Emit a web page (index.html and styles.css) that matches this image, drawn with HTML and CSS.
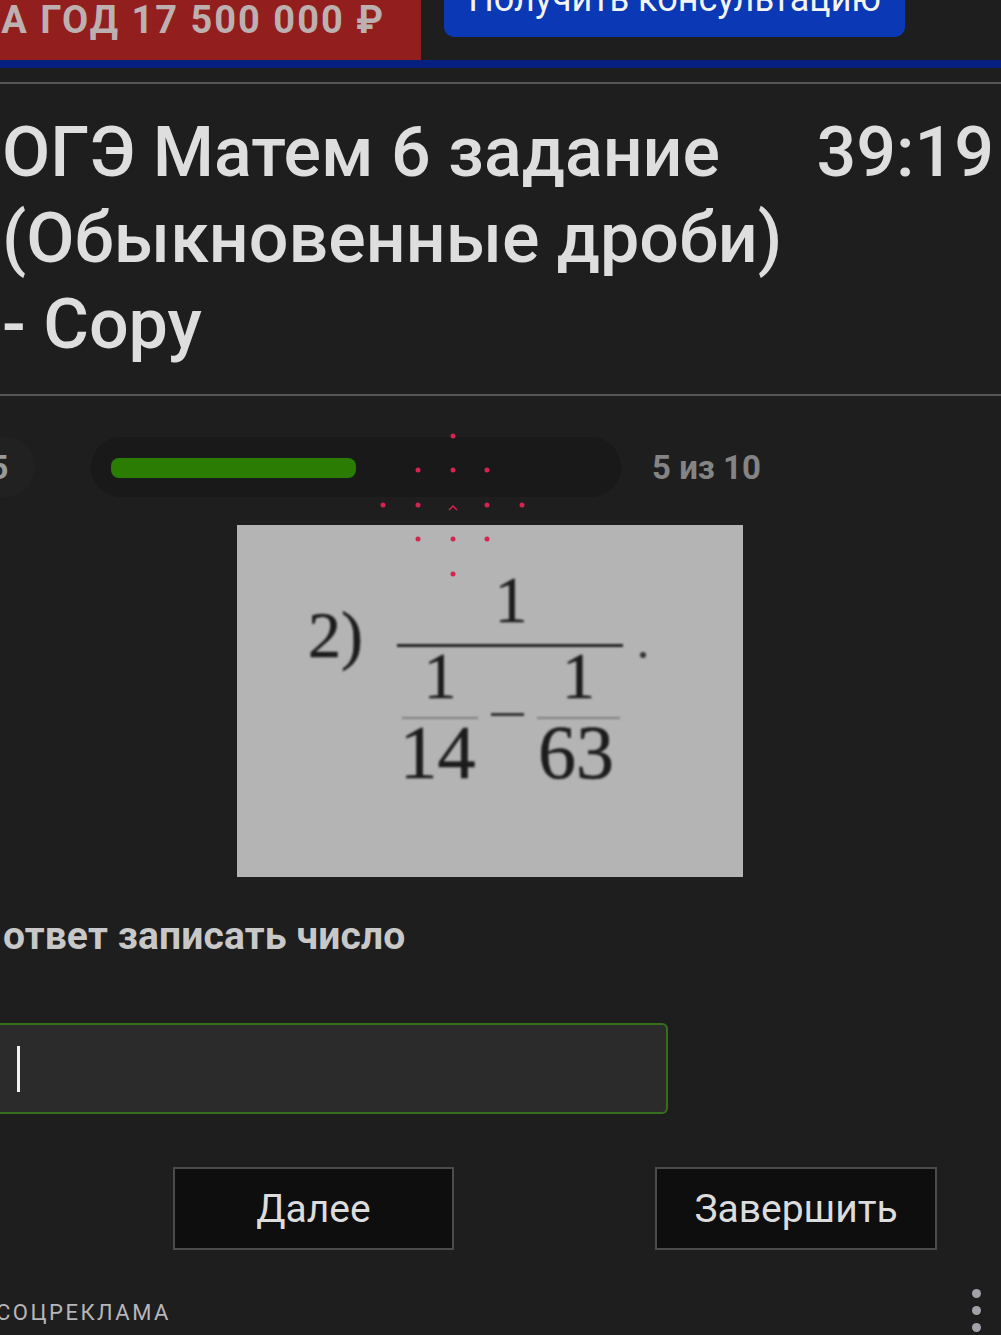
FILE: index.html
```html
<!DOCTYPE html>
<html lang="en">
  <head>
    <meta charset="UTF-8" />
    <meta name="viewport" content="width=device-width, initial-scale=1.0" />
    <title>ОГЭ Матем 6 задание</title>
    <link rel="stylesheet" href="styles.css">
  </head>
  <body>
    <div class="promo">
      <div class="promo-price"><span>ЗА ГОД 17 500 000 ₽</span></div>
      <div class="promo-btn"><span>Получить консультацию</span></div>
    </div>
    <div class="promo-line"></div>

    <header class="test-head">
      <h1>ОГЭ Матем 6 задание<br />(Обыкновенные дроби)<br />- Copy</h1>
      <div class="timer">39:19</div>
    </header>

    <div class="progress-row">
      <div class="step-circle"><span>5</span></div>
      <div class="progress"><div class="progress-fill"></div></div>
      <div class="progress-text">5 из 10</div>
    </div>

    <div class="task-pic">
      <div class="task-math">
        <div class="task-num">2)</div>
        <div class="frac-main">
          <div class="frac-top">1</div>
          <div class="frac-bottom">
            <div class="frac-small">
              <div class="small-top">1</div>
              <div class="small-bottom">14</div>
            </div>
            <div class="minus"></div>
            <div class="frac-small frac-wide">
              <div class="small-top">1</div>
              <div class="small-bottom">63</div>
            </div>
          </div>
        </div>
        <div class="math-dot"></div>
      </div>
    </div>

    <p class="question">ответ записать число</p>

    <div class="answer"><div class="caret"></div></div>

    <div class="actions">
      <div class="btn btn-next">Далее</div>
      <div class="btn btn-finish">Завершить</div>
    </div>

    <div class="foot">
      <span class="foot-label">СОЦРЕКЛАМА</span>
      <div class="foot-menu"><i></i><i></i><i></i></div>
    </div>

    <!-- touch pointer marks on top of the page -->
    <svg class="pointer" width="160" height="155" viewBox="0 0 160 155">
      <g fill="#d6234f">
        <circle cx="80" cy="11" r="2.5" />
        <circle cx="45" cy="45" r="2.5" />
        <circle cx="80" cy="45" r="2.5" />
        <circle cx="114" cy="45" r="2.5" />
        <circle cx="10" cy="80" r="2.5" />
        <circle cx="45" cy="80" r="2.5" />
        <circle cx="114" cy="80" r="2.5" />
        <circle cx="149" cy="80" r="2.5" />
        <circle cx="45" cy="114" r="2.5" />
        <circle cx="80" cy="114" r="2.5" />
        <circle cx="114" cy="114" r="2.5" />
        <circle cx="80" cy="149" r="2.5" />
      </g>
      <path d="M76 85 L80 81 L84 85" fill="none" stroke="#d6234f" stroke-width="1.5" />
    </svg>
  </body>
</html>
```

FILE: styles.css
```css
html,
body {
  margin: 0;
  padding: 0;
}

body {
  position: relative;
  width: 1001px;
  height: 1335px;
  overflow: hidden;
  background-color: #1e1e1f;
  color: #e0e0e0;
  font-family: Roboto, "Liberation Sans", sans-serif;
}

.promo {
  display: flex;
  height: 60px;
  gap: 23px;
  align-items: flex-start;
}

.promo-price {
  width: 421px;
  height: 60px;
  background-color: #931e1e;
  display: flex;
  justify-content: flex-end;
  overflow: hidden;
  padding-right: 36px;
  box-sizing: border-box;
}

.promo-price span {
  display: block;
  flex-shrink: 0;
  font-size: 38px;
  line-height: 40px;
  font-weight: 700;
  letter-spacing: 2px;
  color: #bcb0b0;
  white-space: nowrap;
}

.promo-btn {
  width: 461px;
  height: 37px;
  background-color: #0b39b6;
  border-radius: 0 0 10px 10px;
  overflow: hidden;
  display: flex;
  justify-content: center;
  align-items: flex-end;
}

.promo-btn span {
  font-size: 36px;
  line-height: 36px;
  color: #f4f4f4;
  white-space: nowrap;
  margin-bottom: 20px;
}

.promo-line {
  height: 8px;
  background-color: #06207f;
}

.test-head {
  display: flex;
  justify-content: space-between;
  align-items: flex-start;
  margin-top: 14px;
  border-top: 2px solid #565656;
  border-bottom: 2px solid #565656;
  height: 285px;
  padding: 25px 7px 0 2px;
  box-sizing: content-box;
}

.test-head h1 {
  margin: 0;
  font-size: 70px;
  line-height: 86px;
  font-weight: 500;
  color: #dedede;
}

.timer {
  font-size: 70px;
  line-height: 86px;
  font-weight: 500;
  color: #dedede;
}

.progress-row {
  display: flex;
  align-items: center;
  margin-top: 41px;
  height: 60px;
}

.step-circle {
  width: 35px;
  height: 60px;
  background-color: #212122;
  border-radius: 0 30px 30px 0;
  font-size: 34px;
  font-weight: 700;
  color: #9a9a9a;
  display: flex;
  align-items: center;
  overflow: hidden;
}

.step-circle span {
  margin-left: -11px;
}

.progress {
  width: 530px;
  height: 60px;
  margin-left: 56px;
  background-color: #19191a;
  border-radius: 30px;
  display: flex;
  align-items: center;
  padding-left: 20px;
  box-sizing: border-box;
}

.progress-fill {
  width: 245px;
  height: 20px;
  margin-top: 2px;
  background-color: #2a7c03;
  border-radius: 8px;
}

.progress-text {
  margin-left: 31px;
  font-size: 33px;
  font-weight: 700;
  color: #848484;
}

.task-pic {
  width: 506px;
  height: 352px;
  margin: 28px 0 0 237px;
  background-color: #b4b4b4;
}

.task-math {
  display: flex;
  align-items: flex-start;
  padding: 42px 0 0 71px;
  font-family: "Liberation Serif", serif;
  color: #1c1c1c;
  -webkit-text-stroke: 0.5px #1c1c1c;
  filter: blur(1.1px);
}

.task-num {
  font-size: 66px;
  line-height: 70px;
  margin-top: 33px;
  width: 89px;
}

.frac-main {
  width: 226px;
}

.frac-top {
  height: 80px;
  border-bottom: 3px solid #222;
  text-align: center;
  font-size: 66px;
  line-height: 66px;
  padding-left: 2px;
  box-sizing: border-box;
}

.frac-bottom {
  display: flex;
  align-items: flex-start;
  padding-left: 5px;
}

.frac-small {
  width: 76px;
  text-align: center;
}

.frac-wide {
  width: 83px;
}

.small-top {
  height: 72px;
  box-sizing: border-box;
  border-bottom: 2px solid #7f7f7f;
  font-size: 66px;
  line-height: 58px;
}

.small-bottom {
  margin-left: -5px;
  font-size: 76px;
  line-height: 66px;
}

.minus {
  width: 33px;
  height: 3px;
  margin: 66px 13px 0 13px;
  background-color: #333;
}

.math-dot {
  width: 6px;
  height: 6px;
  margin: 85px 0 0 17px;
  border-radius: 50%;
  background-color: #333;
}

.question {
  margin: 37px 0 0 3px;
  font-size: 39px;
  line-height: 44px;
  font-weight: 700;
  letter-spacing: 0.15px;
  color: #c8c8c8;
}

.answer {
  width: 668px;
  height: 91px;
  margin: 65px 0 0 0;
  box-sizing: border-box;
  background-color: #2b2b2c;
  border: 2px solid #37701c;
  border-left: none;
  border-radius: 0 6px 6px 0;
  display: flex;
  align-items: center;
  padding-left: 17px;
}

.caret {
  width: 3px;
  height: 46px;
  background-color: #f0f0f0;
}

.actions {
  display: flex;
  margin: 53px 0 0 173px;
  gap: 201px;
}

.btn {
  width: 281px;
  height: 83px;
  box-sizing: border-box;
  background-color: #0e0e0e;
  border: 2px solid #4b4b4b;
  display: flex;
  align-items: center;
  justify-content: center;
  font-size: 39px;
  color: #dcdcdc;
}

.btn-finish {
  width: 282px;
}

.foot {
  display: flex;
  justify-content: space-between;
  margin-top: 39px;
}

.foot-label {
  margin: 10px 0 0 -4px;
  font-size: 22px;
  line-height: 28px;
  letter-spacing: 2.5px;
  color: #b6b6ba;
}

.foot-menu {
  display: flex;
  flex-direction: column;
  gap: 8px;
  margin-right: 20px;
}

.foot-menu i {
  display: block;
  width: 9px;
  height: 9px;
  border-radius: 50%;
  background-color: #a2a2aa;
}

.pointer {
  position: absolute;
  left: 373px;
  top: 425px;
}
```
